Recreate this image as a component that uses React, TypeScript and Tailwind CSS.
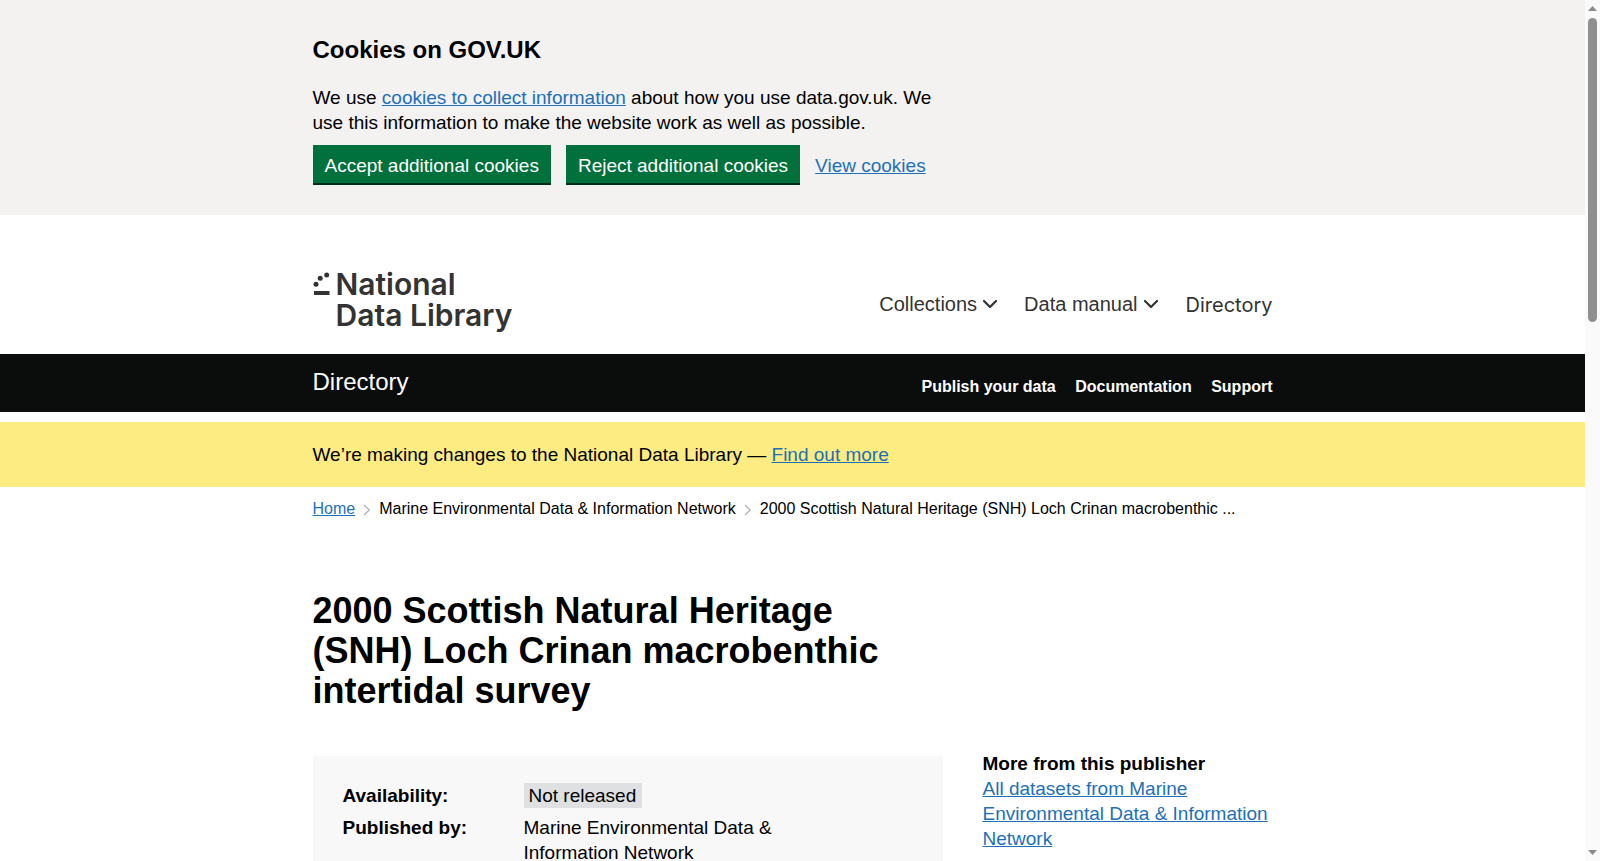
import { ChevronDown } from 'lucide-react';

const sans = 'font-["Liberation_Sans",Arial,sans-serif]';

function Container({ children, className = '' }: { children: React.ReactNode; className?: string }) {
  return <div className={`mx-auto w-[960px] ${className}`}>{children}</div>;
}

function Logo() {
  return (
    <div className="flex items-start">
      <svg width="17" height="24" viewBox="0 0 17 24" className="mt-[3px] shrink-0" fill="#333">
        <circle cx="13.7" cy="3" r="2.5" />
        <circle cx="7.2" cy="6.3" r="2.5" />
        <circle cx="3" cy="12.3" r="2.5" />
        <rect x="1" y="19" width="15.5" height="4" />
      </svg>
      <div className='ml-[6px] font-["Inter",sans-serif] text-[30px] leading-[31px] font-semibold text-[#333]'>
        <div>National</div>
        <div>Data Library</div>
      </div>
    </div>
  );
}

function CookieBanner() {
  return (
    <div className="h-[215px] bg-[#f3f2f1] pt-[35px]">
      <Container>
        <h2 className="text-[24px] leading-[30px] font-bold text-black">Cookies on GOV.UK</h2>
        <p className="mt-[20px] w-[630px] text-[19px] leading-[25px] text-black">
          We use <a className="text-[#1d70b8] underline">cookies to collect information</a> about how you use data.gov.uk. We use this information to make the website work as well as possible.
        </p>
        <div className="mt-[10px] flex items-center gap-[15px] text-[19px] leading-[25px]">
          <button className="h-[38px] bg-[#00703c] px-[12px] pt-[2px] text-white shadow-[0_2px_0_#002d18]">Accept additional cookies</button>
          <button className="h-[38px] bg-[#00703c] px-[12px] pt-[2px] text-white shadow-[0_2px_0_#002d18]">Reject additional cookies</button>
          <a className="mt-[3px] text-[#1d70b8] underline">View cookies</a>
        </div>
      </Container>
    </div>
  );
}

function SiteHeader() {
  return (
    <header className="h-[139px] pt-[54px]">
      <Container className="flex items-start justify-between">
        <Logo />
        <nav className="mt-[20px] flex items-center gap-[22px] text-[20px] leading-[28px] text-[#333]">
          <a className="flex items-center gap-[1px]">Collections<ChevronDown size={24} strokeWidth={2.25} /></a>
          <a className="flex items-center gap-[1px]">Data manual<ChevronDown size={24} strokeWidth={2.25} /></a>
          <a className='mt-[2px] ml-[1px] font-["Inter",sans-serif] text-[20px]'>Directory</a>
        </nav>
      </Container>
    </header>
  );
}

function Breadcrumbs() {
  const Sep = () => (
    <svg width="8" height="12" viewBox="0 0 8 12" className="mx-[8px] mt-[2px]" fill="none" stroke="#b1b4b6" strokeWidth="1.3">
      <path d="M1 1l5.2 5L1 11" />
    </svg>
  );
  return (
    <div className="mt-[12px] flex items-center text-[16px] leading-[20px] text-black">
      <a className="text-[#1d70b8] underline">Home</a>
      <Sep />
      <span>Marine Environmental Data &amp; Information Network</span>
      <Sep />
      <span>2000 Scottish Natural Heritage (SNH) Loch Crinan macrobenthic ...</span>
    </div>
  );
}

export default function App() {
  return (
    <div className={`flex h-[861px] overflow-hidden bg-white ${sans}`}>
      <div className="min-w-0 flex-1 overflow-hidden">
        <CookieBanner />
        <SiteHeader />
        <div className="h-[58px] bg-[#0b0c0c] text-white">
          <Container className="flex justify-between">
            <div className="mt-[13px] text-[24px] leading-[30px]">Directory</div>
            <div className="mt-[23px] flex gap-[19.5px] text-[16px] leading-[20px] font-bold">
              <a>Publish your data</a>
              <a>Documentation</a>
              <a>Support</a>
            </div>
          </Container>
        </div>
        <div className="mt-[10px] h-[65px] bg-[#fcec82] pt-[20px]">
          <Container className="text-[19px] leading-[25px] text-black">
            We’re making changes to the National Data Library — <a className="text-[#1d70b8] underline">Find out more</a>
          </Container>
        </div>
        <Container>
          <Breadcrumbs />
          <h1 className="mt-[72px] w-[630px] text-[36px] leading-[40px] font-bold text-black">
            2000 Scottish Natural Heritage (SNH) Loch Crinan macrobenthic intertidal survey
          </h1>
          <div className="mt-[45px] flex text-[19px] leading-[25px] text-black">
            <div className="w-[630px] bg-[#f8f8f8] px-[30px] pt-[27px] pb-[30px]">
              <div className="flex">
                <div className="w-[181px] font-bold">Availability:</div>
                <div><span className="inline-block bg-[#dee0e2] pr-[6px] pl-[5px]">Not released</span></div>
              </div>
              <div className="mt-[7px] flex">
                <div className="w-[181px] font-bold">Published by:</div>
                <div className="w-[300px]">Marine Environmental Data &amp; Information Network</div>
              </div>
            </div>
            <div className="ml-[40px] w-[290px] -mt-[5px]">
              <div className="font-bold">More from this publisher</div>
              <a className="text-[#1d70b8] underline">All datasets from Marine Environmental Data &amp; Information Network</a>
            </div>
          </div>
        </Container>
      </div>
      <aside className="flex w-[15px] shrink-0 flex-col items-center bg-[#fafafa]">
        <svg width="9" height="5" viewBox="0 0 9 5" className="mt-[6px]" fill="#8a8a8a"><path d="M4.5 0 9 5H0z" /></svg>
        <div className="mt-[7px] h-[304px] w-[9px] rounded-full bg-[#8f8f8f]" />
        <svg width="9" height="5" viewBox="0 0 9 5" className="mt-auto mb-[6px]" fill="#8a8a8a"><path d="M0 0h9L4.5 5z" /></svg>
      </aside>
    </div>
  );
}
